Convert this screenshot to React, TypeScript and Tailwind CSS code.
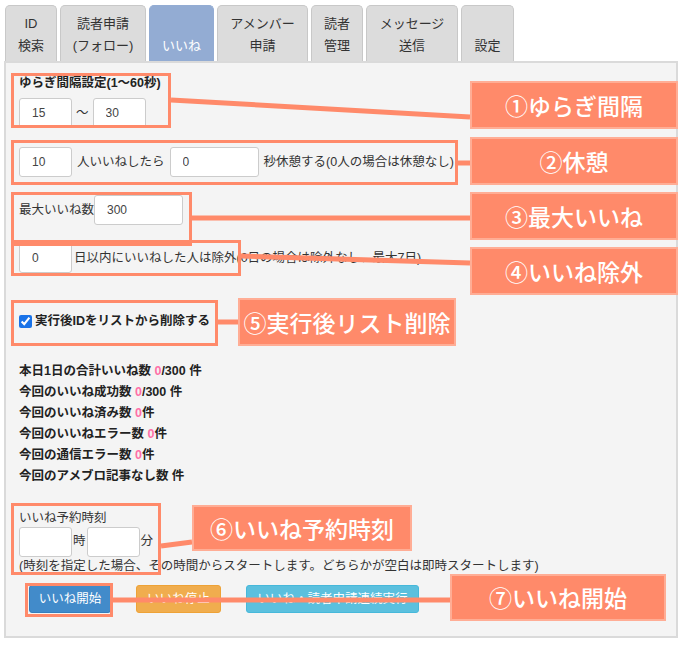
import React from "react";

const font = "font-['Liberation_Sans','Noto_Sans_CJK_JP',sans-serif]";

const tabs = [
  { w: "w-[52px]", l1: "ID", l2: "検索" },
  { w: "w-[86px]", l1: "読者申請", l2: "(フォロー)" },
  { w: "w-[65px]", l1: "", l2: "いいね", active: true },
  { w: "w-[91px]", l1: "アメンバー", l2: "申請" },
  { w: "w-[52px]", l1: "読者", l2: "管理" },
  { w: "w-[92px]", l1: "メッセージ", l2: "送信" },
  { w: "w-[53px]", l1: "", l2: "設定" },
];

function Field({ value, w = "w-[53px]" }: { value?: string; w?: string }) {
  return (
    <input
      readOnly
      defaultValue={value}
      className={`${w} h-[30px] bg-white border border-[#cccccc] rounded-[3px] pl-[12px] text-[12px] text-[#444] outline-none`}
    />
  );
}

function Count({ label, n, tail }: { label: string; n?: string; tail: string }) {
  return (
    <div className="h-[21px] leading-[21px] font-bold text-[12.5px] text-[#222]">
      {label}
      {n && <span className="text-[#ff6fa8]">{n}</span>}
      {tail}
    </div>
  );
}

// annotation overlay: boxes, connectors, callouts
const boxes = [
  "left-[11px] top-[73px] w-[160px] h-[55px]",
  "left-[11px] top-[140px] w-[447px] h-[45px]",
  "left-[11px] top-[192px] w-[181px] h-[54px]",
  "left-[11px] top-[240px] w-[230px] h-[36px]",
  "left-[11px] top-[300px] w-[207px] h-[46px]",
  "left-[11px] top-[503px] w-[150px] h-[72px]",
  "left-[25px] top-[583px] w-[88px] h-[34px]",
];

const callouts = [
  { pos: "left-[470px] top-[81px] w-[208px] h-[48px]", t: "①ゆらぎ間隔" },
  { pos: "left-[470px] top-[137px] w-[208px] h-[48px]", t: "②休憩" },
  { pos: "left-[470px] top-[192px] w-[208px] h-[48px]", t: "③最大いいね" },
  { pos: "left-[470px] top-[247px] w-[208px] h-[48px]", t: "④いいね除外" },
  { pos: "left-[238px] top-[298px] w-[218px] h-[48px]", t: "⑤実行後リスト削除" },
  { pos: "left-[192px] top-[505px] w-[220px] h-[46px]", t: "⑥いいね予約時刻" },
  { pos: "left-[450px] top-[574px] w-[216px] h-[47px]", t: "⑦いいね開始" },
];

const lines = [
  [171, 100, 470, 117],
  [458, 163, 470, 163],
  [192, 218, 470, 218],
  [241, 256, 470, 263],
  [218, 322, 238, 322],
  [161, 546, 192, 542],
  [113, 600, 450, 600],
];

export default function App() {
  return (
    <div className={`relative w-[684px] h-[646px] bg-white text-[#333] ${font}`}>
      {/* tabs */}
      <div className="flex gap-[3px] pl-[5px] pt-[5px]">
        {tabs.map((t, i) => (
          <div
            key={i}
            className={`${t.w} h-[56px] rounded-t-[5px] border border-b-0 flex flex-col items-center justify-center text-[13px] leading-[22px] pt-[2px] ${
              t.active ? "bg-[#93acd3] border-[#93acd3] text-white" : "bg-[#dcdcdc] border-[#c8c8c8] text-[#333]"
            }`}
          >
            <span className="h-[22px]">{t.l1}</span>
            <span className="h-[22px]">{t.l2}</span>
          </div>
        ))}
      </div>

      {/* panel */}
      <div className="ml-[4px] w-[674px] h-[577px] border-2 border-[#dadada] bg-[#f4f4f4] px-[13px] pt-[12px] text-[12.5px]">
        <div className="font-bold leading-[16px] text-[#222]">ゆらぎ間隔設定(1〜60秒)</div>
        <div className="mt-[7px] flex items-center gap-[4px]">
          <Field value="15" />
          <span>〜</span>
          <Field value="30" />
        </div>

        <div className="mt-[19px] flex items-center gap-[5px]">
          <Field value="10" />
          <span>人いいねしたら</span>
          <Field value="0" w="w-[89px]" />
          <span>秒休憩する(0人の場合は休憩なし)</span>
        </div>

        <div className="mt-[18px] flex items-center">
          <span>最大いいね数</span>
          <Field value="300" w="w-[89px]" />
        </div>

        <div className="mt-[18px] flex items-center gap-[2px]">
          <Field value="0" />
          <span>日以内にいいねした人は除外(0日の場合は除外なし、最大7日)</span>
        </div>

        <label className="mt-[40px] flex items-center gap-[3px] font-bold text-[#222] leading-[16px]">
          <input type="checkbox" defaultChecked className="w-[13px] h-[13px] accent-[#1a73e8]" />
          実行後IDをリストから削除する
        </label>

        <div className="mt-[32px]">
          <Count label="本日1日の合計いいね数 " n="0" tail="/300 件" />
          <Count label="今回のいいね成功数 " n="0" tail="/300 件" />
          <Count label="今回のいいね済み数 " n="0" tail="件" />
          <Count label="今回のいいねエラー数 " n="0" tail="件" />
          <Count label="今回の通信エラー数 " n="0" tail="件" />
          <Count label="今回のアメブロ記事なし数 " tail="件" />
        </div>

        <div className="mt-[23px] leading-[16px]">いいね予約時刻</div>
        <div className="mt-[1px] flex items-end gap-[1px]">
          <Field />
          <span className="mb-[6px]">時</span>
          <Field />
          <span className="mb-[6px]">分</span>
        </div>
        <div className="mt-[1px] leading-[16px]">
          (時刻を指定した場合、その時間からスタートします。どちらかが空白は即時スタートします)
        </div>

        <div className="mt-[11px] ml-[10px] flex gap-[25px] text-[12.5px] text-white">
          <button className="w-[82px] h-[28px] rounded-[3px] bg-[#428bca] border border-[#357ebd]">いいね開始</button>
          <button className="w-[85px] h-[28px] rounded-[3px] bg-[#f0ad4e] border border-[#eea236]">いいね停止</button>
          <button className="w-[173px] h-[28px] rounded-[3px] bg-[#5bc0de] border border-[#46b8da]">いいね・読者申請連続実行</button>
        </div>
      </div>

      {/* annotations */}
      <svg className="absolute inset-0 pointer-events-none" width="684" height="646">
        {lines.map(([x1, y1, x2, y2], i) => (
          <line key={i} x1={x1} y1={y1} x2={x2} y2={y2} stroke="#ff8a6a" strokeWidth="5" />
        ))}
      </svg>
      {boxes.map((b, i) => (
        <div key={i} className={`absolute ${b} border-[3px] border-[#ff8a6a] pointer-events-none`} />
      ))}
      {callouts.map((c, i) => (
        <div
          key={i}
          className={`absolute ${c.pos} bg-[#ff8a6a] border-2 border-[#ffad95] flex items-center justify-center text-white text-[23px] font-['Noto_Sans_CJK_JP',sans-serif] font-medium`}
        >
          {c.t}
        </div>
      ))}
    </div>
  );
}
